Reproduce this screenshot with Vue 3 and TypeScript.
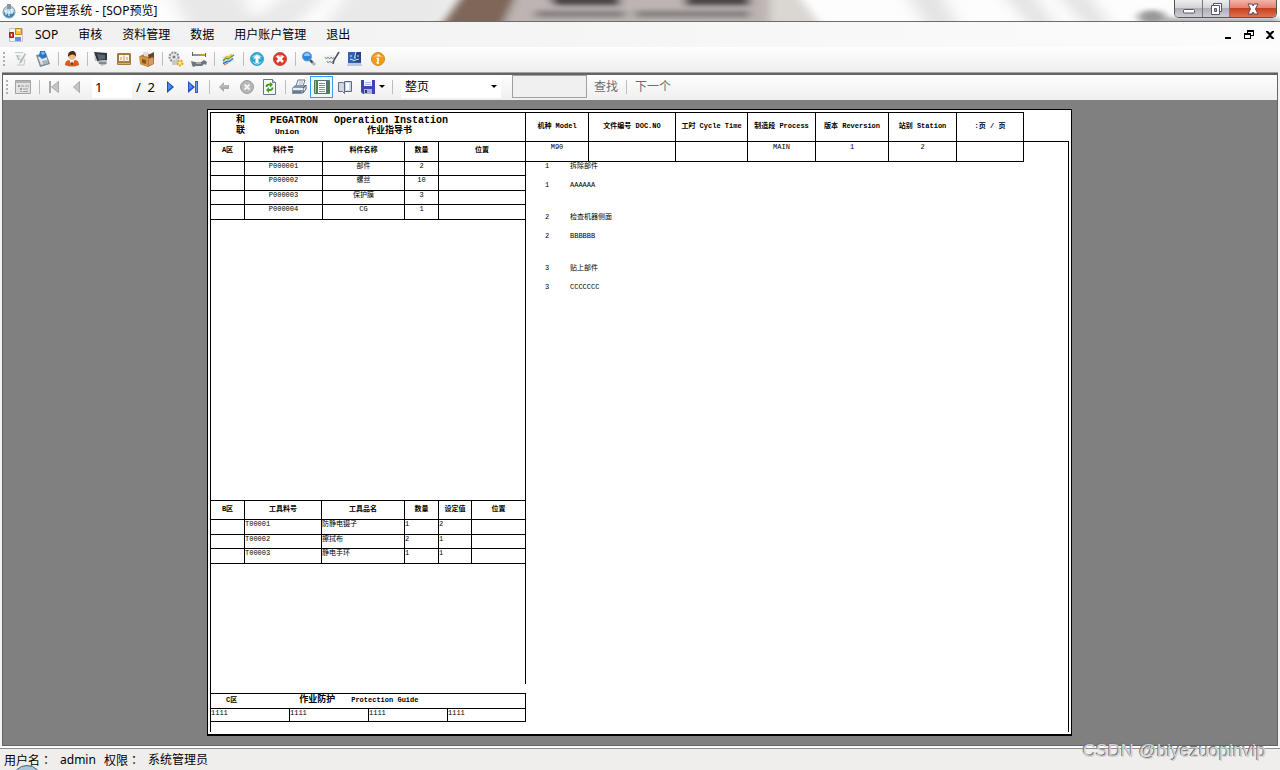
<script setup lang="ts">
import { ref } from 'vue'

interface Tool { label: string; art: string; group?: boolean; off?: boolean; on?: boolean }

const menus = ['SOP', '审核', '资料管理', '数据', '用户账户管理', '退出']

const tools: Tool[] = [
  { label: '编辑', art: '<path d="M3 1h10v4l-1 9H4z" fill="#f1f3f4"/><path d="M3 1.500h8M4 5h5M5 8h4M5 14h7l1-6" stroke="#c3c7ca" fill="none"/><path d="M13 2l-5 8-1 3 3-2 4-8z" fill="#b4babd"/><path d="M5 4l2 5" stroke="#9fb0a8"/>' },
  { label: '粘贴', art: '<path d="M1 4l10-2 4 11-10 3z" fill="#7d8b98"/><path d="M3 6l8-2 2 8-7 2z" fill="#dfe7ee"/><path d="M5 0h5l2 6-5 2-3-3z" fill="#2a72bd"/><path d="M6 1h3l1 2-3 1z" fill="#7fb9ea"/><path d="M7 10l5-1 1 3-5 1z" fill="#a3b1be"/>' },
  { label: '用户', group: true, art: '<path d="M1 14q0-5 5-5h4q5 0 5 5-7 3-14 0z" fill="#dc5a1a"/><path d="M5.500 9h5L8 15z" fill="#fff"/><path d="M8 10l1 3-1 2-1-2z" fill="#3b2a20"/><circle cx="8" cy="5.500" r="3.300" fill="#f1b77c"/><path d="M4 6Q3.500 0.500 8 0t4 6q-1-3-4-2.500T4 6z" fill="#4a2b17"/>' },
  { label: '终端', group: true, art: '<path d="M1 1l13 1v7l-10 1z" fill="#30363b"/><path d="M4 3l8 1v4l-6 1z" fill="#596670"/><path d="M1 1l3 9H2z" fill="#b8c0c6"/><path d="M4 10l10-1v4l-5 2-4-3z" fill="#b6bcc0"/><path d="M6 12l7 0" stroke="#4f565b"/>' },
  { label: '手册', art: '<rect x="1" y="2" width="14" height="12" rx="1" fill="#a67a45"/><path d="M3 4h4.500l.5 1 .5-1H13v6H8.500l-.5 1-.5-1H3z" fill="#fbf5e8"/><path d="M8 5v6M5 6v3M11 6v3" stroke="#b99a74"/><path d="M2 12.500h12" stroke="#d6ae78"/>' },
  { label: '物料', art: '<path d="M1 5l6-3 8 2v9l-6 3-8-3z" fill="#b87832"/><path d="M0 5l9 2v9l-8-3z" fill="#d1934a"/><path d="M4 1h5l1 5-5-1z" fill="#e3ddd3"/><path d="M9 4l6-3v6l-5 1z" fill="#6f4320"/><path d="M3 8l4 1v4l-4-1z" fill="#8c5520"/><path d="M11 7v7M13 6v7" stroke="#f0c384"/>' },
  { label: '设置', group: true, art: '<circle cx="6" cy="6" r="4.500" fill="#e7e9ea" stroke="#8b9195" stroke-width="2" stroke-dasharray="2 1"/><circle cx="6" cy="6" r="1.500" fill="#777f84"/><path d="M4 9h6v5H4z" fill="#c6cacc"/><circle cx="12" cy="12" r="2.500" fill="#ffe57e" stroke="#e0a826" stroke-width="2" stroke-dasharray="2 1"/>' },
  { label: '工具', art: '<path d="M1 3h9v2H1z" fill="#8b9398"/><path d="M9 3h6v2H9z" fill="#d5981b"/><path d="M1.500 1v4M14.500 2v4" stroke="#5d6468"/><path d="M0 10l4 1h6l3-2 3 2-1 3-2-1-2 2H5l-3 1-1-2z" fill="#6f777c"/><path d="M5 12h5" stroke="#dce0e2"/>' },
  { label: '报表', group: true, art: '<path d="M2 6l11-4 1 8-10 5z" fill="#e3e8ec"/><path d="M3 10l3-3 2 1 6-4" stroke="#3aa43a" stroke-width="1.500" fill="none"/><path d="M3 12.500l4-2h2l4-3" stroke="#2d78cd" stroke-width="1.500" fill="none"/><path d="M4 7.500l3-2 2 1 3-3" stroke="#efb423" stroke-width="1.500" fill="none"/><path d="M4 14l4-2" stroke="#e06336"/>' },
  { label: '上移', group: true, art: '<circle cx="8" cy="8" r="6.500" fill="#2aa9d8" stroke="#4a9fc0"/><path d="M3 6a6 5 0 0 1 10 0z" fill="#8adcf3"/><path d="M8 3l4 4.500H9.500V12h-3V7.500H4z" fill="#fff"/><path d="M4 11q4 4 8 0" stroke="#a8ecf8" fill="none"/>' },
  { label: '删除', art: '<circle cx="8" cy="8" r="6.500" fill="#e33523" stroke="#c4503f"/><path d="M3 6a6 5 0 0 1 10 0z" fill="#ee7f6d"/><path d="M5 5l6 6M11 5l-6 6" stroke="#fff" stroke-width="2.600"/>' },
  { label: '查询', group: true, art: '<path d="M9 9l5 5" stroke="#a9b5c0" stroke-width="3"/><path d="M9 9l2.500 2.500" stroke="#3d4f61" stroke-width="2"/><circle cx="6" cy="5.500" r="4.500" fill="#2f86dd" stroke="#5b9bd8"/><path d="M3 5a3 3 0 0 1 6 0z" fill="#8fc6f8"/>' },
  { label: '签核', art: '<path d="M0 5l10-1 1 8-7 2z" fill="#eceeef"/><path d="M1 6l1.500 2L4 6l1.500 2L7 6l1.500 2L10 6M3 10l1 2 2-2 1 2 2-2" stroke="#8a9297" fill="none"/><path d="M15 1l-5 8-1 4" stroke="#4a5055" stroke-width="1.500" fill="none"/>' },
  { label: '界面', art: '<rect x="1" y="1" width="13" height="12" fill="#3264ad"/><path d="M9 1h5v10H8V7h1z" fill="#22457f"/><path d="M4 4v2M11 4v2M3 8q4 3 9 0M9 1L7.500 7H9" stroke="#dce9f8" fill="none"/><path d="M1 12h13l1 3H0z" fill="#b9c8da"/>' },
  { label: '关于', art: '<circle cx="8" cy="8" r="6.500" fill="#f09a16" stroke="#d08c30"/><path d="M3 6a6 5 0 0 1 10 0z" fill="#f9bd58"/><path d="M8.500 7l-1 5M6.500 7.500h2M6.500 12H9" stroke="#fff" stroke-width="1.500"/><circle cx="8.500" cy="4.500" r="1.200" fill="#fff"/>' },
]

const nav: Record<string, Tool> = {
  map: { label: '文档结构图', off: true, art: '<path d="M0.500 1.500h15v13H.5z" fill="#e2e2e2" stroke="#a2a2a2"/><path d="M1 2h14v2H1z" fill="#b4b4b4"/><path d="M3 6h2v2H3zM5 9h2v2H5zM5 12h2v1H5z" fill="#a0a0a0"/><path d="M6 7h3M8 10h5M8 12.500h5M10 7h4" stroke="#a0a0a0"/>' },
  first: { label: '第一页', off: true, art: '<path d="M3 2h2v12H3z" fill="#a7a7a7"/><path d="M12.500 2.500v11L5.500 8z" fill="#c5c5c5" stroke="#aaa"/>' },
  prev: { label: '上一页', off: true, art: '<path d="M10.500 2.500v11L4.500 8z" fill="#c5c5c5" stroke="#aaa"/>' },
  next: { label: '下一页', art: '<path d="M5 2v12l7-6z" fill="#1b4fc0"/><path d="M6 4v7l4-3z" fill="#4f8cf0"/>' },
  last: { label: '最后一页', art: '<path d="M3 2v12l7-6z" fill="#1b4fc0"/><path d="M4 4v7l4-3z" fill="#4f8cf0"/><path d="M10 2h3v12h-3z" fill="#2b62cd"/><path d="M11.500 3v10" stroke="#6d9df0"/>' },
  back: { label: '后退', off: true, art: '<path d="M3 8l5-5v3h5v4H8v3z" fill="#aaa"/><path d="M5 8l2-1h5" stroke="#c9c9c9" fill="none"/>' },
  stop: { label: '停止', off: true, art: '<circle cx="8" cy="8" r="6.500" fill="#b6b6b6" stroke="#9d9d9d"/><path d="M5.500 5.500l5 5M10.500 5.500l-5 5" stroke="#f3f3f3" stroke-width="2"/>' },
  refresh: { label: '刷新', art: '<path d="M1.500.5h9l3 3v12h-12z" fill="#f5f9ff" stroke="#66758e"/><path d="M10.500.5v3h3" fill="#d5deea" stroke="#66758e"/><path d="M4.500 8q0-3 4-2.500M10.500 8.500q0 3-4 2.500" stroke="#46a016" stroke-width="2" fill="none"/><path d="M8 3l3 2.500L8 8.500zM7 8l-3 3 3 3z" fill="#46a016"/>' },
  print: { label: '打印', art: '<path d="M5 7l2-6h7l-2 6z" fill="#fff" stroke="#66758e"/><path d="M1 9l3-3h11l-2 4v3l-2 2H1z" fill="#8795ab"/><path d="M2 9h10v2H2z" fill="#e9eef5"/><path d="M2 13h8M12 9l3-3v4l-3 4" stroke="#4a5870" fill="none"/><path d="M8 3h4M7.500 5h4" stroke="#9aa8bc"/>' },
  layout: { label: '打印布局', on: true, art: '<rect x="0" y="1" width="16" height="14" rx="1" fill="#4a8150"/><path d="M3.500 1.500h9v13h-9z" fill="#fff" stroke="#5b6c83"/><path d="M5 4.500h6M5 6.500h6M5 8.500h6M5 10.500h6M5 12.500h6" stroke="#8493a8"/><path d="M1.500 2v12" stroke="#9bc89d"/>' },
  setup: { label: '页面设置', art: '<path d="M1.500 3.500h4l2 1v10l-2-2h-4z" fill="#cfd8e3" stroke="#66707e"/><path d="M7.500 2.500h7v10h-7z" fill="#c9d9ec" stroke="#5f6b7c"/><path d="M9 4h3v7H9z" fill="#fff"/>' },
  save: { label: '导出', art: '<path d="M1 1h14v14H3l-2-2z" fill="#4143b5"/><path d="M4 1h8v6H4z" fill="#f3f6ff"/><path d="M5 3.500h6M5 5.500h6" stroke="#b0b9dc"/><path d="M4 10h8v5H4z" fill="#a9afd5"/><path d="M5 11h2v3H5z" fill="#303088"/>' },
}

const page = ref('1')
const zoom = ref('整页')
const term = ref('')

const parts = [
  ['', 'P000001', '部件', '2', ''],
  ['', 'P000002', '螺丝', '10', ''],
  ['', 'P000003', '保护膜', '3', ''],
  ['', 'P000004', 'CG', '1', ''],
]
const gear = [
  ['', 'T00001', '防静电镊子', '1', '2', ''],
  ['', 'T00002', '擦拭布', '2', '1', ''],
  ['', 'T00003', '静电手环', '1', '1', ''],
]
const heads = ['机种 Model', '文件编号 DOC.NO', '工时 Cycle Time', '制造段 Process', '版本 Reversion', '站别 Station', ':页 / 页']
const values = ['M90', '', '', 'MAIN', '1', '2', '']
const steps = [
  ['1', '拆除部件', 'AAAAAA'],
  ['2', '检查机器侧面', 'BBBBBB'],
  ['3', '贴上部件', 'CCCCCCC'],
]
</script>

<template>
  <div class="window">
    <header class="title">
      <svg class="glass" viewBox="0 0 1280 21" preserveAspectRatio="none" aria-hidden="true">
        <defs>
          <filter id="soft" x="-10%" y="-50%" width="120%" height="200%"><feGaussianBlur stdDeviation="9 2" /></filter>
          <filter id="smear" x="-10%" y="-50%" width="120%" height="200%"><feGaussianBlur stdDeviation="5 2" /></filter>
        </defs>
        <rect width="1280" height="21" fill="#fdfdfd" />
        <g filter="url(#soft)">
          <path d="M170-9h70l20 40H190z" fill="#e8e8e8" />
          <path d="M290-9h40l-40 40h-50z" fill="#e9e9e9" />
          <path d="M350-9h115l-30 40H320z" fill="#e9e9e9" />
          <path d="M905-9h35l20 40h-30zM1000-9h30l30 40h-25zM1055-9h30l30 40h-25z" fill="#e3e3e3" />
        </g>
        <g filter="url(#smear)">
          <path d="M465-9h320l35 40H435z" fill="#bdb5b3" />
          <path d="M466-9h52l-18 40h-62z" fill="#7e6659" />
          <path d="M545-9h75v15h-65zM685-9h65v15h-65z" fill="#4e4648" />
          <path d="M535 10h90v8h-90zM635 10h115v8H635z" fill="#8a8585" />
          <path d="M770-9h25l30 40h-55z" fill="#dad7d3" />
          <ellipse cx="1152" cy="17" rx="14" ry="7" fill="#999" />
          <path d="M1165 18h115v6h-115z" fill="#aaa" />
        </g>
      </svg>
      <svg class="icon" viewBox="0 0 16 16" aria-hidden="true"><circle cx="8" cy="9" r="6" fill="#b8d4e8" stroke="#7b98ac" /><path d="M6 1h4v5H6z" fill="#89939b" /><path d="M3 9q5 4 10 0v3q-5 5-10 0z" fill="#3a85bc" /><path d="M5 7v5M8 8v5M11 6v5" stroke="#fff" /></svg>
      <h1>SOP管理系统 - [SOP预览]</h1>
      <div class="caption">
        <button aria-label="最小化"><svg viewBox="0 0 14 12"><rect x="1.500" y="6.500" width="11" height="3.500" rx="1" fill="#fff" stroke="#535666" /></svg></button>
        <button aria-label="还原"><svg viewBox="0 0 14 12"><path d="M4.500.5h8v8h-8z" fill="#fff" stroke="#535666" /><path d="M2.500 2.500h8v9h-8z" fill="#fff" stroke="#535666" /><path d="M5.500 5.500h2v3h-2z" fill="#9ea1ae" stroke="#535666" /></svg></button>
        <button class="shut" aria-label="关闭"><svg viewBox="0 0 14 12"><path d="M2 1h4l1 2 1-2h4L9.500 6l2.500 5H8L7 9l-1 2H2l2.500-5z" fill="#fff" stroke="#5b4650" /></svg></button>
      </div>
    </header>

    <nav class="menu">
      <svg class="icon" viewBox="0 0 16 16" aria-hidden="true"><path d="M1.500 1.500h13v13h-13z" fill="#f4f4f4" stroke="#c4c4c4" /><path d="M7.500 1.500h6v6h-6z" fill="#f7c53c" stroke="#c08c1c" /><path d="M1.500 5.500h4v5h-4z" fill="#d8402e" stroke="#93281a" /><path d="M7 10h6v4H7z" fill="#5a90e8" /><path d="M3 7h1v2H3zM9 3h3v1H9z" fill="#fff" /></svg>
      <button v-for="m in menus" :key="m">{{ m }}</button>
      <div class="mdi">
        <button aria-label="最小化文档"><svg viewBox="0 0 10 10"><path d="M2 7h6v2H2z" /></svg></button>
        <button aria-label="还原文档"><svg viewBox="0 0 10 10"><path d="M3 0h7v6H7V5h2V2H4v1H3zM0 3h7v6H0zM1 5v3h5V5z" fill-rule="evenodd" /></svg></button>
        <button aria-label="关闭文档"><svg viewBox="0 0 10 10"><path d="M1 1h2l2 2 2-2h2v1L6 5l3 3v1H7L5 7 3 9H1V8l3-3-3-3z" /></svg></button>
      </div>
    </nav>

    <div class="tools" role="toolbar" aria-label="工具栏">
      <i class="grip"></i>
      <template v-for="t in tools" :key="t.label">
        <i v-if="t.group" class="sep"></i>
        <button class="tool" :aria-label="t.label"><svg viewBox="0 0 16 16" v-html="t.art"></svg></button>
      </template>
    </div>

    <main class="viewer">
      <div class="bar" role="toolbar" aria-label="报表工具栏">
        <i class="grip"></i>
        <button class="tool map" :aria-label="nav.map.label"><svg viewBox="0 0 16 16" v-html="nav.map.art"></svg></button>
        <i class="sep wide"></i>
        <button v-for="k in ['first', 'prev']" :key="k" class="tool" :aria-label="nav[k].label"><svg viewBox="0 0 16 16" v-html="nav[k].art"></svg></button>
        <input v-model="page" class="page" aria-label="当前页">
        <span class="total">/&nbsp; 2</span>
        <button v-for="k in ['next', 'last']" :key="k" class="tool" :aria-label="nav[k].label"><svg viewBox="0 0 16 16" v-html="nav[k].art"></svg></button>
        <i class="sep wide"></i>
        <button v-for="k in ['back', 'stop', 'refresh']" :key="k" class="tool" :aria-label="nav[k].label"><svg viewBox="0 0 16 16" v-html="nav[k].art"></svg></button>
        <i class="sep"></i>
        <button v-for="k in ['print', 'layout', 'setup']" :key="k" class="tool" :class="{ on: nav[k].on }" :aria-label="nav[k].label"><svg viewBox="0 0 16 16" v-html="nav[k].art"></svg></button>
        <button class="tool drop" :aria-label="nav.save.label"><svg viewBox="0 0 16 16" v-html="nav.save.art"></svg><i class="arrow"></i></button>
        <i class="sep"></i>
        <label class="zoom">
          <select v-model="zoom" aria-label="缩放"><option>整页</option><option>页宽</option><option>100%</option></select>
          <i class="arrow"></i>
        </label>
        <input v-model="term" class="term" aria-label="查找内容">
        <button class="word">查找</button>
        <i class="sep"></i>
        <button class="word">下一个</button>
      </div>

      <div class="canvas">
        <article class="paper">
          <section class="left">
            <div class="brand">
              <b>和</b><b class="latin">PEGATRON</b><b class="latin">Operation Instation</b>
              <b>联</b><b class="union">Union</b><b class="guide">作业指导书</b>
            </div>
            <table class="grid parts">
              <colgroup><col class="w34"><col class="w78"><col class="w82"><col class="w34"><col class="w87"></colgroup>
              <thead><tr><th>A区</th><th>料件号</th><th>料件名称</th><th>数量</th><th>位置</th></tr></thead>
              <tbody><tr v-for="r in parts" :key="r[1]"><td v-for="(c, i) in r" :key="i">{{ c }}</td></tr></tbody>
            </table>
            <div class="blank tall"></div>
            <table class="grid gear">
              <colgroup><col class="w34"><col class="w77"><col class="w83"><col class="w34"><col class="w33"><col class="w54"></colgroup>
              <thead><tr><th>B区</th><th>工具料号</th><th>工具品名</th><th>数量</th><th>设定值</th><th>位置</th></tr></thead>
              <tbody><tr v-for="r in gear" :key="r[1]"><td v-for="(c, i) in r" :key="i">{{ c }}</td></tr></tbody>
            </table>
            <div class="blank"></div>
            <table class="grid guard">
              <colgroup><col class="w79"><col class="w79"><col class="w79"><col class="w78"></colgroup>
              <thead><tr><th colspan="4"><span class="zone">C区</span><span class="name">作业防护</span><span>Protection Guide</span></th></tr></thead>
              <tbody><tr><td v-for="n in 4" :key="n">1111</td></tr></tbody>
            </table>
          </section>
          <section class="right">
            <div class="top">
              <table class="grid meta">
                <colgroup><col class="w63"><col class="w87"><col class="w72"><col class="w68"><col class="w73"><col class="w68"><col class="w67"></colgroup>
                <thead><tr><th v-for="h in heads" :key="h">{{ h }}</th></tr></thead>
                <tbody><tr><td v-for="(v, i) in values" :key="i">{{ v }}</td></tr></tbody>
              </table>
              <div class="corner"></div>
            </div>
            <div class="steps">
              <div v-for="s in steps" :key="s[0]" class="step">
                <span>{{ s[0] }}</span><span>{{ s[1] }}</span>
                <span>{{ s[0] }}</span><span>{{ s[2] }}</span>
              </div>
            </div>
          </section>
        </article>
      </div>
    </main>

    <footer class="status">
      <span>用户名<span class="colon">：</span></span><span class="user">admin</span><span class="right-name">权限<span class="colon">：</span></span><span>系统管理员</span>
      <i class="orb"></i>
    </footer>
    <div class="mark">CSDN @biyezuopinvip</div>
  </div>
</template>

<style>
html, body { margin: 0; background: #f0eded; }
</style>

<style scoped>
.window {
  position: relative;
  display: flex;
  flex-direction: column;
  min-height: 100vh;
  overflow: hidden;
  font: 12px/16px "Noto Sans", "Noto Sans CJK SC", sans-serif;
  color: #000;
  background: #f4f4f4;
}
* { box-sizing: border-box; }
button { margin: 0; padding: 0; border: 0; background: none; font: inherit; color: inherit; }
svg { display: block; }
.icon { width: 16px; height: 16px; flex: none; }

.title { position: relative; display: flex; align-items: center; height: 22px; border-bottom: 1px solid #6e6b6c; }
.glass { position: absolute; inset: 0; width: 100%; height: 21px; z-index: 0; }
.title .icon { position: relative; margin: 0 4px 0 1px; }
.title h1 { position: relative; margin: 0; font-size: 12px; font-weight: 400; flex: 1; }
.caption { position: relative; display: flex; align-self: flex-start; height: 18px; margin-right: 3px; border: 1px solid #55545b; border-top: 0; border-radius: 0 0 5px 5px; overflow: hidden; }
.caption button { display: flex; align-items: center; justify-content: center; width: 28px; border-right: 1px solid #77767d; background: linear-gradient(#eeeef0, #d4d4d8 45%, #aeaeb5 50%, #cdcdd2); }
.caption button + button { width: 27px; }
.caption .shut { width: 46px; border: 0; background: linear-gradient(#f4b3a8, #e38474 45%, #c8401f 50%, #de7254); }
.caption svg { width: 14px; height: 12px; }

.menu { display: flex; align-items: center; gap: 20px; height: 25px; padding: 0 5px 0 8px; background: linear-gradient(90deg, #f0f0f0, #fcfcfc); }
.menu .icon { margin-right: -9px; }
.mdi { display: flex; gap: 11px; margin-left: auto; }
.mdi svg { width: 10px; height: 10px; }

.tools, .bar { display: flex; align-items: center; height: 25px; padding-bottom: 2px; background: linear-gradient(#fefefe, #efefef); }
.grip { flex: none; width: 2px; height: 14px; margin: 0 3px; background: repeating-linear-gradient(#b0b0b0 0 2px, transparent 2px 4px); }
.tool { flex: none; display: flex; align-items: center; justify-content: center; width: 23px; height: 22px; }
.tool svg { width: 16px; height: 16px; }
.sep { flex: none; width: 1px; height: 14px; margin: 0 1px 0 4px; background: #bdbdbd; }
.wide { margin: 0 2px 0 5px; }

.viewer { flex: 1; display: flex; flex-direction: column; margin: 1px 2px 0; border: 1px solid #646464; border-top-width: 2px; box-shadow: 0 -1px #a2a2a2; }
.page { width: 40px; height: 23px; margin: 0 4px 0 4px; padding: 0 3px; border: 0; background: #fff; font: inherit; font-size: 13px; }
.total { width: 22px; font-size: 13px; white-space: nowrap; }
.on { border: 1px solid #3399ff; background: #eef6ff; }
.arrow { flex: none; border: 3px solid transparent; border-top-color: #000; border-bottom: 0; }
.drop { width: 32px; gap: 3px; }
.zoom { display: flex; align-items: center; width: 100px; height: 23px; margin: 0 11px 0 7px; padding-right: 4px; background: #fff; }
select { flex: 1; min-width: 0; height: 23px; padding: 0 4px; border: 0; appearance: none; background: none; font: inherit; }
.term { width: 75px; height: 23px; margin-right: 7px; border: 1px solid #a0a0a0; background: #f0f0f0; font: inherit; }
.word { color: #6d6d6d; margin-right: 4px; }
.sep + .word { margin-left: 7px; }

.canvas { flex: 1; display: flex; padding: 9px 205px 9px 204px; background: #808080; }
.paper {
  flex: 1;
  display: grid;
  grid-template-columns: 316fr 543fr;
  padding: 2px;
  border: 1px solid #000;
  border-bottom-width: 2px;
  background: #fff;
  font: 7px/9px "Liberation Mono", "Noto Sans CJK SC", monospace;
}
.left { display: flex; flex-direction: column; min-width: 0; padding-bottom: 10px; border-left: 1px solid #000; }
.brand {
  display: grid;
  grid-template-columns: 34px 64px auto;
  align-content: center;
  height: 30px;
  padding: 0 0 2px 25px;
  border: 1px solid #000;
  border-left: 0;
  font-size: 9px;
  line-height: 11px;
  white-space: nowrap;
}
.latin { font-size: 10px; }
.union { padding-left: 5px; font-size: 8px; }
.guide { padding-left: 33px; }
.grid { width: 100%; table-layout: fixed; border-collapse: separate; border-spacing: 0; }
.grid th, .grid td { padding: 0; border: 0 solid #000; border-width: 0 1px 1px 0; white-space: nowrap; overflow: hidden; }
.grid th { padding-bottom: 2px; }
.grid td { vertical-align: top; text-align: center; }
.grid tr { height: 14px; }
.parts thead tr { height: 20px; }
.parts tbody tr:nth-child(even), .gear tbody tr:nth-child(odd) { height: 15px; }
.gear thead tr { height: 19px; }
.gear, .guard, .meta { border-top: 1px solid #000; }
.gear td, .guard td { text-align: left; }
.blank { flex: 3; border-right: 1px solid #000; }
.tall { flex: 7; }
.guard { margin-top: 9px; }
.guard thead tr { height: 15px; }
.guard tbody tr { height: 13px; }
.guard th { text-align: left; }
.zone { padding: 0 62px 0 15px; }
.name { padding-right: 16px; font-size: 9px; }
.right { display: flex; flex-direction: column; min-width: 0; }
.top { display: flex; }
.meta { flex: 498; }
.meta thead tr { height: 29px; }
.meta tbody tr { height: 20px; }
.meta td { padding-top: 1px; }
.corner { flex: 45; margin-top: 29px; border: 1px solid #000; border-width: 1px 1px 0 0; }
.steps { flex: 1; border-right: 1px solid #000; }
.step { display: grid; grid-template-columns: 25px auto; grid-auto-rows: 19px; padding: 0 0 13px 19px; }
.w33 { width: 33px; } .w34 { width: 34px; } .w54 { width: 54px; } .w63 { width: 63px; }
.w67 { width: 67px; } .w68 { width: 68px; } .w72 { width: 72px; } .w73 { width: 73px; }
.w77 { width: 77px; } .w78 { width: 78px; } .w79 { width: 79px; } .w82 { width: 82px; }
.w83 { width: 83px; } .w87 { width: 87px; }

.status { position: relative; display: flex; align-items: center; height: 24px; padding: 4px 4px 0; overflow: hidden; background: linear-gradient(#fff 2px, #8f8f8f 2px 3px, #f0eded 3px); }
.colon { font-family: "Noto Sans CJK TC", sans-serif; }
.user { margin: 0 8px; }
.right-name { margin-right: 8px; }
.orb { position: absolute; left: 12px; top: 19px; width: 30px; height: 30px; border: 1px solid #43647f; border-radius: 50%; background: #a9c5da; }
.mark { position: absolute; right: 14px; bottom: 7px; font: 18px/24px "Liberation Sans", Arial, sans-serif; color: #d0d0d0; text-shadow: -1px -1px #777; }
</style>
